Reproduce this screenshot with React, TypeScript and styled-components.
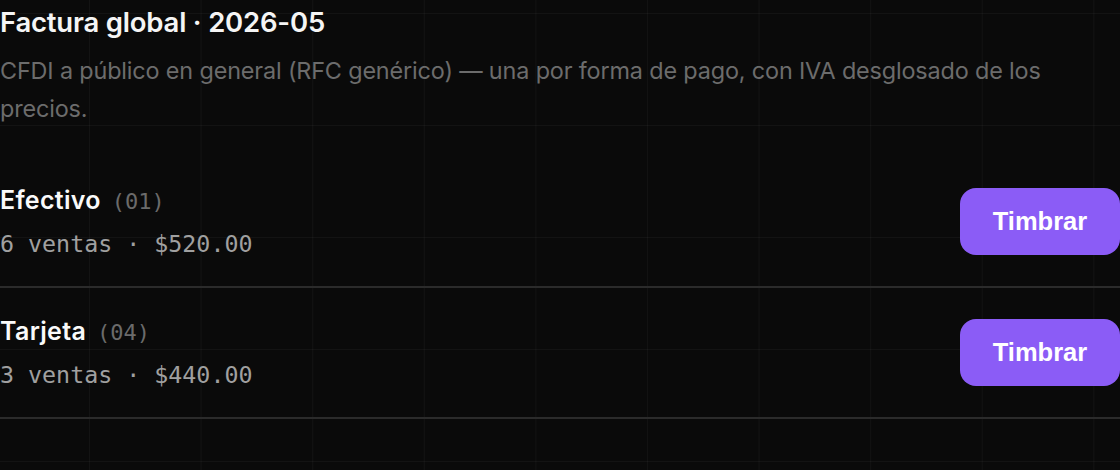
import styled, { createGlobalStyle } from "styled-components";

const GlobalStyle = createGlobalStyle`
  html, body {
    margin: 0;
    padding: 0;
    background: #0a0a0a;
  }
  * {
    box-sizing: border-box;
  }
`;

type Method = {
  name: string;
  code: string;
  count: number;
  total: string;
};

const methods: Method[] = [
  { name: "Efectivo", code: "01", count: 6, total: "$520.00" },
  { name: "Tarjeta", code: "04", count: 3, total: "$440.00" },
];

const App = () => {
  return (
    <Page>
      <GlobalStyle />
      <Header>
        <Title>Factura global · 2026-05</Title>
        <Description>
          CFDI a público en general (RFC genérico) — una por forma de pago, con
          IVA desglosado de los precios.
        </Description>
      </Header>
      <List>
        {methods.map((m) => (
          <Row key={m.code}>
            <Info>
              <Name>
                {m.name}
                <Code>({m.code})</Code>
              </Name>
              <Meta>
                {m.count} ventas · {m.total}
              </Meta>
            </Info>
            <StampButton type="button">Timbrar</StampButton>
          </Row>
        ))}
      </List>
    </Page>
  );
};

const Page = styled.div`
  width: 1120px;
  min-height: 470px;
  background-color: #0a0a0a;
  background-image: linear-gradient(
      to right,
      rgba(255, 255, 255, 0.035) 1px,
      transparent 1px
    ),
    linear-gradient(to bottom, rgba(255, 255, 255, 0.035) 1px, transparent 1px);
  background-size: 111.6px 112px;
  background-position: 89px 13px;
  color: #fafafa;
  font-family: Inter, "Noto Sans", sans-serif;
`;

const Header = styled.header`
  display: flex;
  flex-direction: column;
  gap: 12px;
  padding-top: 4px;
`;

const Title = styled.h1`
  margin: 0;
  font-size: 27.5px;
  font-weight: 600;
  line-height: 36px;
  letter-spacing: -0.2px;
  color: #f5f5f5;
`;

const Description = styled.p`
  margin: 0;
  font-size: 23.4px;
  line-height: 38px;
  color: #6c6c6c;
  letter-spacing: -0.15px;
`;

const List = styled.div`
  display: flex;
  flex-direction: column;
  margin-top: 29px;
`;

const Row = styled.div`
  display: flex;
  align-items: center;
  justify-content: space-between;
  height: 131px;
  border-bottom: 2px solid #2b2b2b;
`;

const Info = styled.div`
  display: flex;
  flex-direction: column;
  gap: 8px;
`;

const Name = styled.div`
  display: flex;
  align-items: baseline;
  gap: 11px;
  font-size: 25px;
  font-weight: 600;
  line-height: 34px;
  color: #fafafa;
  letter-spacing: 0.3px;
`;

const Code = styled.span`
  font-family: "DejaVu Sans Mono", "Liberation Mono", monospace;
  font-size: 22px;
  font-weight: 400;
  letter-spacing: 0;
  color: #6b6b6b;
`;

const Meta = styled.div`
  font-family: "DejaVu Sans Mono", "Liberation Mono", monospace;
  font-size: 23.3px;
  line-height: 34px;
  color: #a0a0a0;
`;

const StampButton = styled.button`
  width: 160px;
  height: 67px;
  border: none;
  border-radius: 16px;
  background: #8b5cf6;
  color: #ffffff;
  font-family: "Liberation Sans", Arial, sans-serif;
  font-size: 25.5px;
  font-weight: 700;
  cursor: pointer;
`;

export default App;
